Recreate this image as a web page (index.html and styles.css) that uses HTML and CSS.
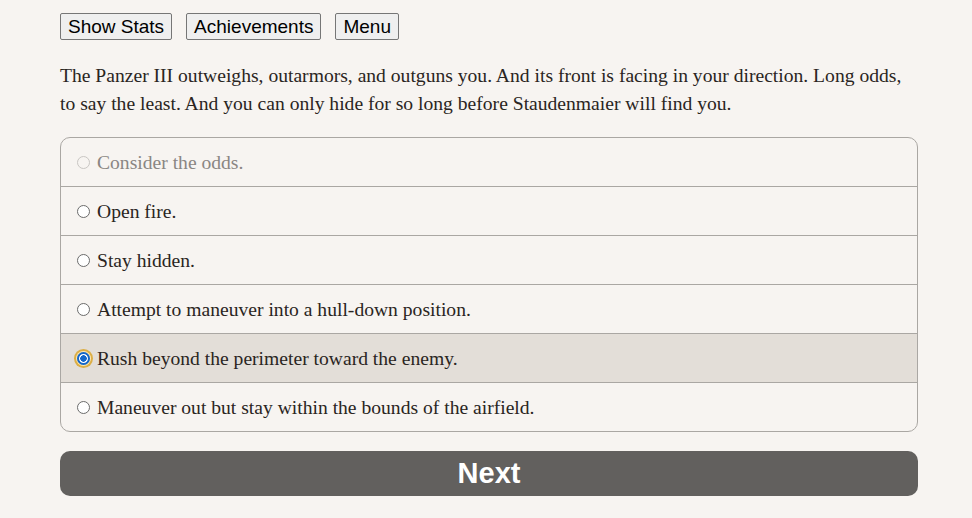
FILE: index.html
```html
<!DOCTYPE html>
<html>
<head>
<meta charset="utf-8">
<link rel="stylesheet" href="styles.css">
</head>
<body>
<div class="page">
  <div class="toolbar">
    <button class="tbtn">Show Stats</button>
    <button class="tbtn">Achievements</button>
    <button class="tbtn">Menu</button>
  </div>
  <p class="story">The Panzer III outweighs, outarmors, and outguns you. And its front is facing in your direction. Long odds, to say the least. And you can only hide for so long before Staudenmaier will find you.</p>
  <form class="choices">
    <label class="choice disabled"><input type="radio" name="c" disabled><span>Consider the odds.</span></label>
    <label class="choice"><input type="radio" name="c"><span>Open fire.</span></label>
    <label class="choice"><input type="radio" name="c"><span>Stay hidden.</span></label>
    <label class="choice"><input type="radio" name="c"><span>Attempt to maneuver into a hull-down position.</span></label>
    <label class="choice selected"><input type="radio" name="c" checked><span>Rush beyond the perimeter toward the enemy.</span></label>
    <label class="choice"><input type="radio" name="c"><span>Maneuver out but stay within the bounds of the airfield.</span></label>
  </form>
  <button class="next">Next</button>
</div>
</body>
</html>
```
FILE: styles.css
```css
html, body {
  margin: 0;
  padding: 0;
  background: #f7f4f1;
}
body {
  font-family: "Liberation Serif", serif;
  color: #2a2522;
}
.page {
  width: 858px;
  margin-left: 60px;
  padding-top: 13px;
}
.toolbar {
  display: flex;
  gap: 14px;
}
.tbtn {
  font-family: "Liberation Sans", Arial, sans-serif;
  font-size: 19px;
  height: 27px;
  padding: 0 7px;
  border: 1px solid #767676;
  border-radius: 2px;
  background: #efefef;
  color: #000;
  line-height: 25px;
}
.story {
  margin: 22px 0 19px;
  font-size: 19.6px;
  line-height: 28px;
}
.choices {
  border: 1px solid #aaa7a3;
  border-radius: 10px;
  overflow: hidden;
}
.choice {
  display: flex;
  align-items: center;
  height: 46px;
  padding: 2px 0 0 16px;
  font-size: 19.6px;
  border-top: 1px solid #aaa7a3;
}
.choice:first-child {
  border-top: none;
}
.choice input {
  appearance: none;
  -webkit-appearance: none;
  box-sizing: border-box;
  margin: -2px 7px 0 0;
  width: 13px;
  height: 13px;
  border: 1px solid #6b6b6b;
  border-radius: 50%;
  background: #fff;
  flex: none;
}
.choice.disabled input {
  border-color: #c9c6c3;
  background: #f7f4f1;
}
.choice.disabled {
  color: #8a8683;
}
.choice.selected {
  background: #e3ded8;
}
.choice.selected input {
  border: 2px solid #1467c9;
  background: radial-gradient(circle, #1467c9 0 3px, #fff 3.5px);
  box-shadow: 0 0 0 1px #fbe9b8, 0 0 0 3px #dcae45;
}
.next {
  display: block;
  width: 100%;
  height: 45px;
  margin-top: 19px;
  border: none;
  border-radius: 10px;
  background: #62605e;
  color: #fff;
  font-family: "Liberation Sans", Arial, sans-serif;
  font-weight: bold;
  font-size: 29px;
}
```
